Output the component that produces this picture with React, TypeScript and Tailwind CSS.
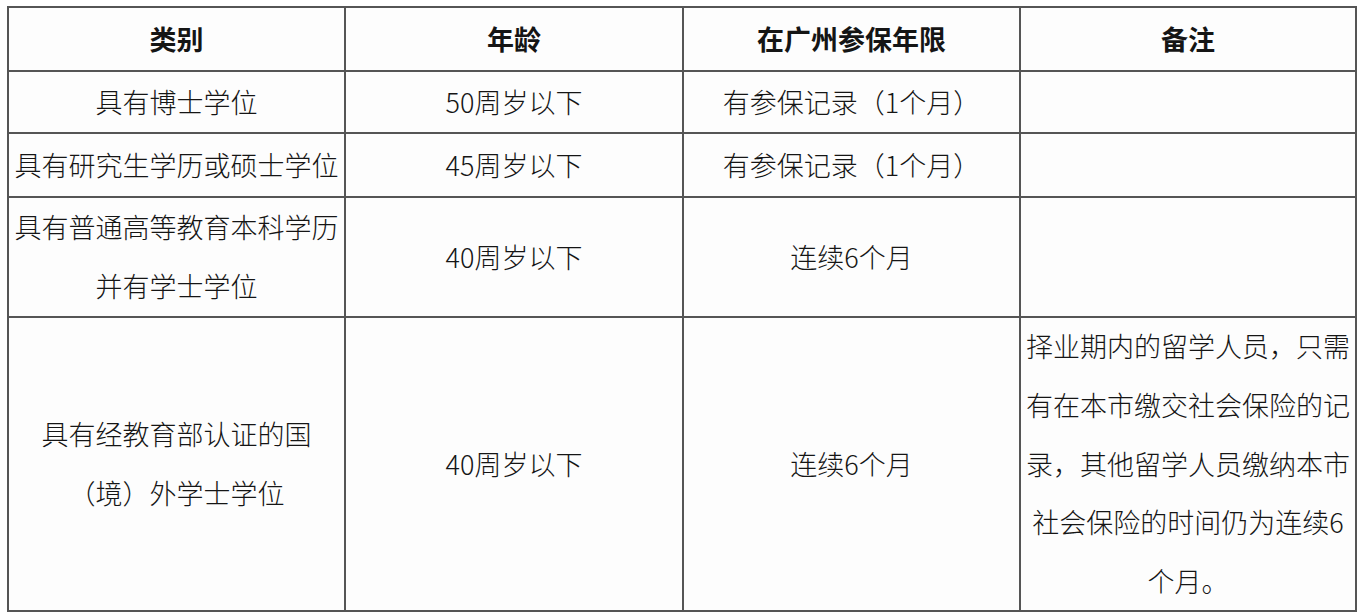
import React from "react";

const font = {
  fontFamily: '"Noto Sans CJK SC", "Noto Sans", sans-serif',
};

type Cell = { lines: string[]; bold?: boolean };

const rows: Cell[][] = [
  [
    { lines: ["类别"], bold: true },
    { lines: ["年龄"], bold: true },
    { lines: ["在广州参保年限"], bold: true },
    { lines: ["备注"], bold: true },
  ],
  [
    { lines: ["具有博士学位"] },
    { lines: ["50周岁以下"] },
    { lines: ["有参保记录（1个月）"] },
    { lines: [] },
  ],
  [
    { lines: ["具有研究生学历或硕士学位"] },
    { lines: ["45周岁以下"] },
    { lines: ["有参保记录（1个月）"] },
    { lines: [] },
  ],
  [
    { lines: ["具有普通高等教育本科学历", "并有学士学位"] },
    { lines: ["40周岁以下"] },
    { lines: ["连续6个月"] },
    { lines: [] },
  ],
  [
    { lines: ["具有经教育部认证的国", "（境）外学士学位"] },
    { lines: ["40周岁以下"] },
    { lines: ["连续6个月"] },
    {
      lines: [
        "择业期内的留学人员，只需",
        "有在本市缴交社会保险的记",
        "录，其他留学人员缴纳本市",
        "社会保险的时间仍为连续6",
        "个月。",
      ],
    },
  ],
];

export default function App() {
  return (
    <div className="w-[1362px] h-[616px] bg-white overflow-hidden" style={font}>
      <div className="ml-[7px] mt-[6px] w-[1350px] border-t-2 border-l-2 border-[#555] grid grid-cols-[337px_338px_337px_336px] grid-rows-[64px_62px_64px_120px_294px] bg-[#fdfdfd]">
        {rows.map((row, ri) =>
          row.map((cell, ci) => (
            <div
              key={`${ri}-${ci}`}
              className={`border-r-2 border-b-2 border-[#555] flex flex-col items-center justify-center text-center text-[27px] leading-[58.7px] text-[#151515] whitespace-nowrap ${
                cell.bold ? "font-bold" : "font-light"
              }`}
            >
              {cell.lines.map((l, li) => (
                <span key={li} className="block">
                  {l}
                </span>
              ))}
            </div>
          ))
        )}
      </div>
    </div>
  );
}
